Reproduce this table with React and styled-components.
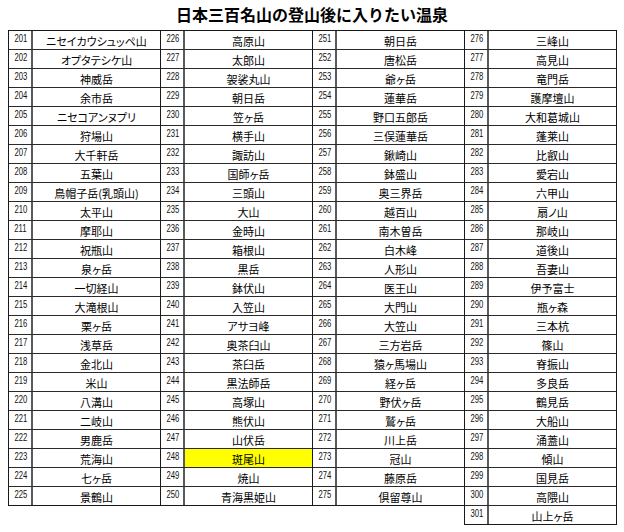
import React from 'react'
import styled, { createGlobalStyle } from 'styled-components'

const names = [
  'ニセイカウシュッペ山', 'オプタテシケ山', '神威岳', '余市岳', 'ニセコアンヌプリ',
  '狩場山', '大千軒岳', '五葉山', '鳥帽子岳(乳頭山)', '太平山',
  '摩耶山', '祝瓶山', '泉ヶ岳', '一切経山', '大滝根山',
  '栗ヶ岳', '浅草岳', '金北山', '米山', '八溝山',
  '二岐山', '男鹿岳', '荒海山', '七ヶ岳', '景鶴山',
  '高原山', '太郎山', '袈裟丸山', '朝日岳', '笠ヶ岳',
  '横手山', '諏訪山', '国師ヶ岳', '三頭山', '大山',
  '金時山', '箱根山', '黒岳', '鉢伏山', '入笠山',
  'アサヨ峰', '奥茶臼山', '茶臼岳', '黒法師岳', '高塚山',
  '熊伏山', '山伏岳', '斑尾山', '焼山', '青海黒姫山',
  '朝日岳', '唐松岳', '爺ヶ岳', '蓮華岳', '野口五郎岳',
  '三俣蓮華岳', '鍬崎山', '鉢盛山', '奥三界岳', '越百山',
  '南木曽岳', '白木峰', '人形山', '医王山', '大門山',
  '大笠山', '三方岩岳', '猿ヶ馬場山', '経ヶ岳', '野伏ヶ岳',
  '鷲ヶ岳', '川上岳', '冠山', '藤原岳', '倶留尊山',
  '三峰山', '高見山', '竜門岳', '護摩壇山', '大和葛城山',
  '蓬莱山', '比叡山', '愛宕山', '六甲山', '扇ノ山',
  '那岐山', '道後山', '吾妻山', '伊予富士', '瓶ヶ森',
  '三本杭', '篠山', '脊振山', '多良岳', '鶴見岳',
  '大船山', '涌蓋山', '傾山', '国見岳', '高隈山',
  '山上ヶ岳'
]

const highlighted = 248

const groups = [
  names.slice(0, 25),
  names.slice(25, 50),
  names.slice(50, 75),
  names.slice(75)
]

const GlobalStyle = createGlobalStyle`
  html, body {
    margin: 0;
    background: #ffffff;
  }
  body {
    font-family: "Noto Sans CJK JP", "Noto Sans", sans-serif;
  }
`

const Page = styled.div`
  width: 624px;
  height: 532px;
  background: #ffffff;
  overflow: hidden;
`

const Title = styled.h1`
  margin: 0;
  height: 30px;
  line-height: 28px;
  text-align: center;
  font-size: 16px;
  font-weight: 700;
  color: #000000;
  font-family: "Noto Sans CJK JP", sans-serif;
`

const Table = styled.div`
  display: flex;
  align-items: flex-start;
  padding-left: 8px;
`

const Group = styled.div`
  width: 153px;
  box-sizing: border-box;
  border: 1px solid #1a1a1a;
  & + & {
    margin-left: -1px;
  }
`

const Row = styled.div`
  display: grid;
  grid-template-columns: 24px 1fr;
  height: 18px;
  & + & {
    border-top: 1px solid #2a2a2a;
  }
`

const Num = styled.div`
  display: flex;
  justify-content: flex-end;
  align-items: flex-start;
  border-right: 2px solid #5a5a5a;
  padding: 2px 4px 0 0;
`

const Digits = styled.span`
  display: block;
  font-family: "Liberation Sans", sans-serif;
  font-size: 11px;
  line-height: 11px;
  color: #111111;
  transform: scaleX(0.7);
  transform-origin: right top;
`

const Name = styled.div`
  background: ${(p) => (p.$marked ? '#ffff00' : 'transparent')};
  font-size: 11px;
  line-height: 21px;
  font-feature-settings: "palt";
  text-align: center;
  white-space: nowrap;
  color: #000000;
  overflow: hidden;
`

export default function App () {
  return (
    <Page>
      <GlobalStyle />
      <Title>日本三百名山の登山後に入りたい温泉</Title>
      <Table>
        {groups.map((list, g) => (
          <Group key={g}>
            {list.map((name, i) => {
              const no = 201 + g * 25 + i
              return (
                <Row key={no}>
                  <Num><Digits>{no}</Digits></Num>
                  <Name $marked={no === highlighted}>{name}</Name>
                </Row>
              )
            })}
          </Group>
        ))}
      </Table>
    </Page>
  )
}
